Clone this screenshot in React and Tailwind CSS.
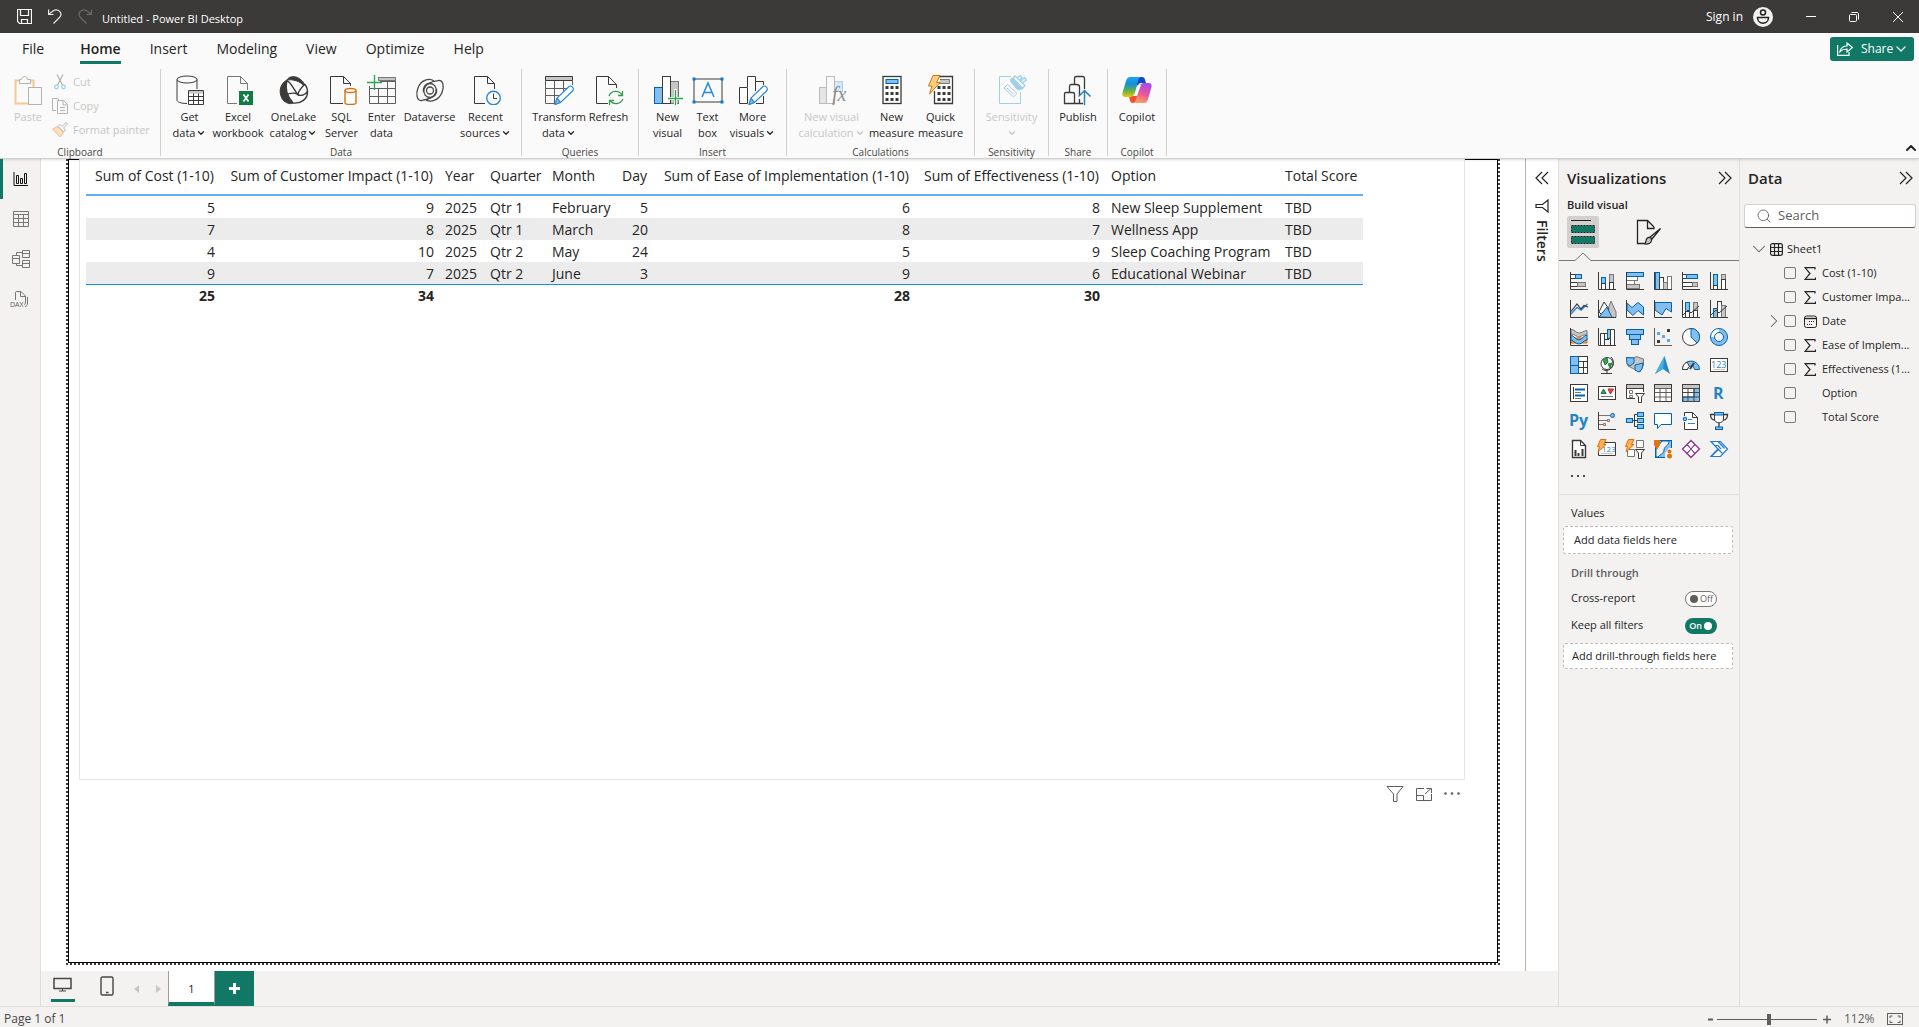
import { ChevronDown, ChevronRight, ChevronUp, Search } from 'lucide-react';

const DARK = '#3b3a39';
const BLUE = '#0063b1';
const SKY = '#83beec';
const GRAY = '#c8c6c4';
const MID = '#797775';

/* ---------- Ribbon icons (30 x 30) ---------- */

const Icon30 = ({ children }) => (
    <svg width="30" height="30" viewBox="0 0 30 30" fill="none" stroke={DARK} aria-hidden="true">
        {children}
    </svg>
);

const Pencil = () => (
    <>
        <path d="M11 29.5L13 23L25 11.5C27 10 31 13 28.5 16L16.5 27.5Z M13 23L16.5 27.5" stroke="#2b88d8" fill="#fff" strokeWidth="1.2" />
        <path d="M11 29.5L13 23.5L16 27.5Z" fill={SKY} stroke="#2b88d8" />
    </>
);

const icons = {
    paste: (
        <Icon30>
            <path d="M6.5 5.5H2.5V28.5H16M20.5 12V5.5H16.5" stroke="#f4c892" strokeWidth="2" />
            <path d="M6.5 8.5V4.5H8.5C8.5 0.5 14.5 0.5 14.5 4.5H17.5V8.5Z" stroke="#b5b3b1" fill="#fafafa" />
            <rect x="15.5" y="12.5" width="13" height="17" stroke="#b5b3b1" fill="#fafafa" />
        </Icon30>
    ),
    getData: (
        <Icon30>
            <ellipse cx="12" cy="4.5" rx="10" ry="3.5" />
            <path d="M2 4.5V25C2 27 6 28.5 12 28.5M22 4.5V14" />
            <path d="M13.5 15.5H28.5V29.5H13.5ZM13.5 21.5H28.5M13.5 25.5H28.5M18.5 18V29M23.5 18V29" fill="#fff" />
            <rect x="14" y="16" width="14" height="2.5" fill={GRAY} stroke="none" />
        </Icon30>
    ),
    excel: (
        <Icon30>
            <path d="M14 28.5H4.5V1.5H17.5L24.5 8.5V15M17.5 1.5V8.5H24.5" stroke={MID} />
            <rect x="16" y="16" width="14" height="14" fill="#107c41" stroke="none" />
            <path d="M20.5 19.5L25.5 26.5M25.5 19.5L20.5 26.5" stroke="#fff" strokeWidth="1.8" />
        </Icon30>
    ),
    oneLake: (
        <Icon30>
            <path d="M8 5C0 9 -1 20 5 26C9 29 12 29 14 28C7 22 6 12 8 5Z" fill={DARK} />
            <path d="M8 5C10 0.5 18 0.5 22 5C25 7 25 9 25 11C21 6 14 4 8 5Z" fill={DARK} />
            <path d="M8 5C6 12 7 20 14 28C22 29 29 24 28.5 16C28 12 27 10 25 9M8 6C11 6 14 13 19 20M25 10C22 13 19 16 19 20C22 21 27 20 28.5 16M7 20C12 17 18 18 19 20" strokeWidth="1.4" />
        </Icon30>
    ),
    sql: (
        <Icon30>
            <path d="M16 28.5H3.5V1.5H16.5L23.5 8.5V11M16.5 1.5V8.5H23.5" />
            <path d="M18 15.5V28C18 30 29 30 29 28V15.5" fill="#fff" stroke="#d67012" strokeWidth="1.4" />
            <ellipse cx="23.5" cy="15.5" rx="5.5" ry="2" fill="#fff" stroke="#d67012" strokeWidth="1.4" />
        </Icon30>
    ),
    enter: (
        <Icon30>
            <path d="M2.5 11V28.5H28.5V2.5H11M2.5 13.5H28.5M2.5 21.5H28.5M11.5 13V28M20.5 6V28M13 6.5H28" stroke="#605e5c" />
            <path d="M11.5 2.5H28.5V5.5H11.5Z" fill={GRAY} stroke={MID} />
            <path d="M7.5 0V15M0 7.5H15" stroke="#2da84f" strokeWidth="1.4" />
        </Icon30>
    ),
    dataverse: (
        <Icon30>
            <g stroke="#4a4846" strokeWidth="1.3">
                <path d="M19 6C14 2.5 6 5 3 13C0.5 19 2 26 6.5 25.5C10 25 19 24 21 17C22 12 19 8.5 15 8.5C10 8.5 7.5 13 8.5 17" />
                <path d="M11 25C16 28 24 25 27 17.5C29.5 11 28 5 23.5 5.5C20 6 11 7 9 14C8 19 11 22.5 15 22.5C20 22.5 22.5 18 21.5 14" />
                <circle cx="15" cy="15.5" r="3.5" />
            </g>
        </Icon30>
    ),
    recent: (
        <Icon30>
            <path d="M14 28.5H3.5V1.5H16.5L23.5 8.5V14M16.5 1.5V8.5H23.5" />
            <circle cx="22.5" cy="23" r="6.8" stroke="#2b88d8" fill="#fff" strokeWidth="1.4" />
            <path d="M22.5 18.5V23.5H26" />
        </Icon30>
    ),
    transform: (
        <Icon30>
            <path d="M1.5 5.5V28.5H11M1.5 13.5H24M1.5 20.5H18M10.5 6V28M19.5 6V18M28.5 6V10" stroke="#605e5c" />
            <path d="M1.5 1.5H28.5V5.5H1.5Z" fill={GRAY} />
            <Pencil />
        </Icon30>
    ),
    refresh: (
        <Icon30>
            <path d="M14 28.5H2.5V1.5H14.5L22.5 9.5V13M14.5 1.5V9.5H22.5" />
            <path d="M15 21C17 15 25 15 28 20M28.5 16V20.5H24M29 24C26 30 19 30 16 25.5M15.5 30V25.5H20" stroke="#2f9e4c" strokeWidth="1.3" />
        </Icon30>
    ),
    newVisual: (
        <Icon30>
            <rect x="1.5" y="12.5" width="8" height="16" fill={SKY} stroke={BLUE} />
            <rect x="17.5" y="6.5" width="8" height="22" fill={GRAY} stroke={MID} />
            <rect x="9.5" y="1.5" width="8" height="27" fill="#fff" />
            <path d="M22.5 14V30M15 23.5H30" stroke="#fff" strokeWidth="3" />
            <path d="M22.5 15V30M15 23.5H30" stroke="#2da84f" strokeWidth="1.4" />
        </Icon30>
    ),
    textBox: (
        <svg width="32" height="30" viewBox="0 0 32 30" fill="none" aria-hidden="true">
            <path d="M2 4H30V27H2Z" stroke={DARK} />
            <path d="M0.5 2.5h3v3h-3zM28.5 2.5h3v3h-3zM0.5 25.5h3v3h-3zM28.5 25.5h3v3h-3z" fill="#0f7ac8" />
            <path d="M10 22L16 8L22 22M12 17.5H20" stroke="#2b88d8" strokeWidth="1.5" />
        </svg>
    ),
    moreVisuals: (
        <Icon30>
            <path d="M1.5 12.5H9.5V28.5H1.5ZM9.5 12V1.5H17.5V16M17.5 6.5H25.5V10M25.5 21V28.5H18" />
            <Pencil />
        </Icon30>
    ),
    visualCalc: (
        <Icon30>
            <rect x="2.5" y="12.5" width="7" height="16" fill="#e6e4e2" stroke="#bbb" />
            <rect x="17.5" y="6.5" width="8" height="10" fill="#d3e8f8" stroke="#a9cfec" />
            <rect x="9.5" y="1.5" width="8" height="27" fill="#fafafa" stroke="#bbb" />
            <text x="15" y="26" fontFamily="Liberation Serif, serif" fontStyle="italic" fontSize="20" fill="#8f8d8b" stroke="none">fx</text>
        </Icon30>
    ),
    measure: (
        <Icon30>
            <rect x="6" y="1.5" width="18" height="27" fill="#fff" strokeWidth="1.3" />
            <rect x="9" y="4.5" width="12" height="4" fill={SKY} stroke={BLUE} />
            <path d="M8.5 12.5H21.5M8.5 18.5H21.5M8.5 24.5H21.5" strokeWidth="3" strokeDasharray="3 2" />
        </Icon30>
    ),
    quick: (
        <Icon30>
            <path d="M10 1.5H26.5V28.5H8.5V16" fill="#fff" strokeWidth="1.3" />
            <path d="M14 4.5H23.5V8.5H13" fill={GRAY} stroke={MID} />
            <path d="M11.5 12.5H24.5M11.5 18.5H24.5M11.5 24.5H24.5" strokeWidth="3" strokeDasharray="3 2" />
            <path d="M7 0.5H14L10.5 7.5H14L3.5 19L6 11H2.5Z" fill="#fdd17c" stroke="#d67012" />
        </Icon30>
    ),
    sensitivity: (
        <Icon30>
            <g stroke="#a0cfe9">
                <path d="M14 1.5H2.5V28.5H23.5V17" />
                <path d="M7 13L10.5 9.5L20 18.5L16.5 22ZM10 13L16.5 19" />
                <path d="M15 3C13 4 13 7 15 8L20 14C22 16 25 14 26 13Z" fill="#a0cfe9" />
                <path d="M16 3L18 1L28 10.5L25.5 13.5ZM20 3L23 0.5L25 2.5L23 5M25 8L29.5 5L27.5 2.5L24 6" fill="#fafafa" strokeWidth="1.3" />
            </g>
        </Icon30>
    ),
    publish: (
        <Icon30>
            <path d="M1.5 28.5V18.5C1.5 17.5 2 17.5 3 17.5H9C10.5 17.5 11.5 18 11.5 19V28.5ZM6.5 17V11.5C6.5 10 7 9.5 8 9.5H13.5C15.5 9.5 16.5 10 16.5 12V20M11.5 9V3.5C11.5 2 12 1.5 13.5 1.5H19.5C21 1.5 21.5 2 21.5 3.5V14M16.5 24V28.5H11.5M16 28.5H20" strokeWidth="1.3" />
            <path d="M21.5 30V16M15.5 21.5L21.5 15.5L27.5 21.5" stroke="#2b7fb8" strokeWidth="1.5" />
        </Icon30>
    ),
    copilot: (
        <svg width="30" height="30" viewBox="0 0 30 30" aria-hidden="true">
            <defs>
                <linearGradient id="copilotLeft" x1="0" y1="0" x2="0" y2="1">
                    <stop offset="0" stopColor="#1aa5ee" />
                    <stop offset="0.35" stopColor="#168fd8" />
                    <stop offset="0.7" stopColor="#67b345" />
                    <stop offset="1" stopColor="#f5c60a" />
                </linearGradient>
                <linearGradient id="copilotRight" x1="0.6" y1="0" x2="0.3" y2="1">
                    <stop offset="0" stopColor="#a64cf0" />
                    <stop offset="0.5" stopColor="#e8559b" />
                    <stop offset="1" stopColor="#ffa35c" />
                </linearGradient>
            </defs>
            <path d="M15 2H20C23 2 23 5 24 8H18L14 12Z" fill="#1546c8" />
            <path d="M15 28H11C8 28 8 25 7 21H12L17 18Z" fill="#ee4f35" />
            <path d="M8 2H19C16 3 16 6 15 10L13 18C12 21 10 22 8 22H3C0 22 0 19 1 16L4 6C5 3 6 2 8 2Z" fill="url(#copilotLeft)" />
            <path d="M22 28H11C14 27 14 24 15 20L17 12C18 9 20 8 22 8H27C30 8 30 11 29 14L26 24C25 27 24 28 22 28Z" fill="url(#copilotRight)" />
            <path d="M16 10H19L15 21H11C13 20 14 14 16 10Z" fill="#fafafa" />
        </svg>
    ),
};

const ribbonGroups = [
    {
        name: 'Data',
        width: 'w-[361px]',
        items: [
            { icon: 'getData', lines: ['Get', 'data'], menu: true, width: 'w-[40px]' },
            { icon: 'excel', lines: ['Excel', 'workbook'], width: 'w-[57px]' },
            { icon: 'oneLake', lines: ['OneLake', 'catalog'], menu: true, width: 'w-[54px]' },
            { icon: 'sql', lines: ['SQL', 'Server'], width: 'w-[42px]' },
            { icon: 'enter', lines: ['Enter', 'data'], width: 'w-[38px]' },
            { icon: 'dataverse', lines: ['Dataverse', ''], width: 'w-[58px]' },
            { icon: 'recent', lines: ['Recent', 'sources'], menu: true, width: 'w-[54px]' },
        ],
    },
    {
        name: 'Queries',
        width: 'w-[117px]',
        items: [
            { icon: 'transform', lines: ['Transform', 'data'], menu: true, width: 'w-[57px]' },
            { icon: 'refresh', lines: ['Refresh', ''], width: 'w-[42px]' },
        ],
    },
    {
        name: 'Insert',
        width: 'w-[148px]',
        items: [
            { icon: 'newVisual', lines: ['New', 'visual'], width: 'w-[42px]' },
            { icon: 'textBox', lines: ['Text', 'box'], width: 'w-[38px]' },
            { icon: 'moreVisuals', lines: ['More', 'visuals'], menu: true, width: 'w-[52px]' },
        ],
    },
    {
        name: 'Calculations',
        width: 'w-[188px]',
        items: [
            { icon: 'visualCalc', lines: ['New visual', 'calculation'], menu: true, width: 'w-[68px]', disabled: true },
            { icon: 'measure', lines: ['New', 'measure'], width: 'w-[52px]' },
            { icon: 'quick', lines: ['Quick', 'measure'], width: 'w-[46px]' },
        ],
    },
    {
        name: 'Sensitivity',
        width: 'w-[74px]',
        items: [{ icon: 'sensitivity', lines: ['Sensitivity', ''], menu: true, width: 'w-[60px]', disabled: true }],
    },
    {
        name: 'Share',
        width: 'w-[59px]',
        items: [{ icon: 'publish', lines: ['Publish', ''], width: 'w-[44px]' }],
    },
    {
        name: 'Copilot',
        width: 'w-[59px]',
        items: [{ icon: 'copilot', lines: ['Copilot', ''], width: 'w-[44px]' }],
    },
];

/* ---------- Visualization gallery icons (18 x 18) ---------- */

const Axis = () => <path d="M0.5 0V17.5H18" />;
const blue = { fill: SKY, stroke: BLUE };
const gray = { fill: GRAY, stroke: MID };
const white = { fill: '#fff', stroke: DARK };
const Bolt = () => <path d="M2.5 -0.5H8L5.5 4.5H8L0 12L1.5 6.5H-0.5Z" fill="#fdb04f" stroke="#d67012" />;
const Funnel = () => <path d="M9.5 9.5H18.5L15.5 13V18.5H12.5V13Z" {...white} />;

const visuals = [
    ['Stacked bar chart', <><rect x="0.5" y="2.5" width="5" height="4" {...white} /><rect x="5.5" y="2.5" width="6" height="4" {...blue} /><rect x="0.5" y="10.5" width="7" height="4" {...white} /><rect x="7.5" y="10.5" width="8" height="4" {...gray} /><Axis /></>],
    ['Stacked column chart', <><rect x="3.5" y="5.5" width="4" height="6" {...blue} /><rect x="3.5" y="11.5" width="4" height="6" {...white} /><rect x="11.5" y="2.5" width="4" height="8" {...gray} /><rect x="11.5" y="10.5" width="4" height="7" {...white} /><Axis /></>],
    ['Clustered bar chart', <><rect x="0.5" y="4.5" width="11" height="4" {...gray} fill="#fff" /><rect x="0.5" y="8.5" width="8" height="4" {...gray} fill="#fff" /><rect x="0.5" y="12.5" width="13" height="4" {...gray} /><rect x="0.5" y="0.5" width="17" height="4" {...blue} /><Axis /></>],
    ['Clustered column chart', <><rect x="1.5" y="0.5" width="4" height="17" {...blue} /><rect x="5.5" y="5.5" width="4" height="12" {...white} /><rect x="9.5" y="10.5" width="4" height="7" {...gray} /><rect x="13.5" y="4.5" width="4" height="13" {...gray} fill="#fff" /><Axis /></>],
    ['100% stacked bar chart', <><rect x="0.5" y="2.5" width="4" height="4" {...white} /><rect x="4.5" y="2.5" width="11" height="4" {...blue} /><rect x="0.5" y="10.5" width="10" height="4" {...white} /><rect x="10.5" y="10.5" width="5" height="4" {...gray} /><Axis /></>],
    ['100% stacked column chart', <><rect x="3.5" y="2.5" width="4" height="11" {...blue} /><rect x="3.5" y="13.5" width="4" height="4" {...white} /><rect x="11.5" y="2.5" width="4" height="5" {...gray} /><rect x="11.5" y="7.5" width="4" height="10" {...white} /><Axis /></>],
    ['Line chart', <><path d="M1 14L7 7.5L11 10L17.5 4" stroke="#2b88d8" strokeWidth="1.4" /><path d="M1 11.5L7 4L11 9L14 5.5L18 7" stroke={DARK} strokeWidth="1.2" /><Axis /></>],
    ['Area chart', <><path d="M7 17L13 1L18 12V17.5Z" {...gray} /><path d="M1 12L6 2L11 9L6 17Z" {...white} /><path d="M1 17L9 7L14 17.5Z" {...blue} /><Axis /></>],
    ['Stacked area chart', <><path d="M1 3L6 7.5L12 2.5L17.5 7V15L12 10.5L7 15.5L1 10Z" {...blue} /><Axis /></>],
    ['100% stacked area chart', <><path d="M1 2.5H17.5V12L12 8.5L8 15L1 10Z" {...blue} /><Axis /></>],
    ['Line and stacked column chart', <><rect x="3.5" y="2.5" width="4" height="9" {...blue} /><rect x="3.5" y="11.5" width="4" height="6" {...white} /><rect x="11.5" y="2.5" width="4" height="8" {...gray} /><rect x="11.5" y="10.5" width="4" height="7" {...white} /><path d="M1 15L6 10L9 13L17 6" /><Axis /></>],
    ['Line and clustered column chart', <><rect x="3.5" y="8.5" width="4" height="9" {...blue} /><rect x="7.5" y="1.5" width="4" height="16" {...white} /><rect x="11.5" y="5.5" width="4" height="12" {...gray} /><path d="M1 15L6 10L9 13L17 6" /><Axis /></>],
    ['Ribbon chart', <><path d="M1 10H17V15H1Z" fill="#f7a13d" stroke="#d67012" /><path d="M1 1.5C4 1 6 5 9 5S13 3 17 2.5V7C13 6 11 9 9 9S5 6 1 6Z" {...gray} /><path d="M1 7C4 8 6 12 9 12S14 7 17 7V12C14 12 12 16 9 16S4 13 1 12Z" {...blue} /><Axis /></>],
    ['Waterfall chart', <><path d="M2.5 17V5.5H6.5V17" {...white} /><rect x="6.5" y="5.5" width="4" height="6" {...white} /><rect x="9.5" y="1.5" width="3" height="9" {...blue} /><path d="M12.5 17V1.5H16.5V17" {...white} /><Axis /></>],
    ['Funnel chart', <><rect x="0.5" y="1.5" width="17" height="5" {...blue} /><rect x="3.5" y="6.5" width="11" height="5" {...blue} /><rect x="5.5" y="11.5" width="7" height="5" {...blue} /></>],
    ['Scatter chart', <><g stroke="none"><path d="M13 1h3v3h-3zM3 12h3v3h-3z" fill={DARK} /><path d="M3 4h3v3h-3zM8 7h3v3h-3zM13 11h3v3h-3z" fill="#5ea9e8" /></g><path d="M0.5 0V17.5H18" stroke="#605e5c" /></>],
    ['Pie chart', <><circle cx="9" cy="9" r="8.5" {...white} /><path d="M9 9V0.5A8.5 8.5 0 0 1 15 15Z" {...blue} /></>],
    ['Donut chart', <><circle cx="9" cy="9" r="6.5" stroke={SKY} strokeWidth="4" /><path d="M9 2.5A6.5 6.5 0 0 0 2.5 9" stroke="#fff" strokeWidth="4" /><circle cx="9" cy="9" r="8.5" stroke={BLUE} /><circle cx="9" cy="9" r="4.5" stroke={BLUE} /></>],
    ['Treemap', <><rect x="0.5" y="0.5" width="17" height="17" {...white} /><rect x="0.5" y="0.5" width="8" height="17" {...blue} /><path d="M0.5 9.5H8.5" stroke={BLUE} /><path d="M8.5 5.5H17.5M8.5 11.5H17.5M13.5 5.5V17.5" /></>],
    ['Map', <><circle cx="9" cy="7.5" r="6" fill="#fff" /><path d="M5 4L9 2L10 6L7 9ZM10 8L14 7L12 12Z" fill="#2da84f" stroke="#1d7a36" /><path d="M13 1C18 6 15 14 8 14.5M4 13C6 14 8 15 9 14.5V17M3 17.5H14" /></>],
    ['Filled map', <><path d="M0.5 1.5L8 2L10 0.5L17.5 3V9L14 16L8 13L2 10Z" {...gray} /><path d="M0.5 1.5L8 2V7L4 10L1 8ZM9 9L17 7L16 13L13 16L9 14Z" {...blue} /></>],
    ['Azure map', <><path d="M10.5 0L16 18L9 13L1 18Z" fill="#2b88c8" stroke="none" /><path d="M10.5 0L9 13L1 18Z" fill="#45b3dc" stroke="none" /></>],
    ['Gauge', <><path d="M0.5 13.5A8.5 8.5 0 0 1 17.5 13.5H12.5A3.5 3.5 0 0 0 5.5 13.5Z" {...blue} /><path d="M0.5 13.5A8.5 8.5 0 0 1 5 6L7.5 10.5Q5.5 11.5 5.5 13.5Z" {...white} /><path d="M8 13L12 7" strokeWidth="2" /></>],
    ['Card', <><rect x="0.5" y="2.5" width="17" height="13" {...white} /><text x="1" y="12" fontSize="9" fill="#2b7fd0" stroke="none">123</text><path d="M3 13.5H15" stroke={GRAY} /></>],
    ['Multi-row card', <><rect x="0.5" y="0.5" width="17" height="17" {...white} /><path d="M3.5 3V15" /><path d="M5 5.5H15M5 11.5H15" stroke={BLUE} strokeWidth="2" /><path d="M5 8.5H11M5 14.5H11" stroke={MID} /></>],
    ['KPI', <><rect x="0.5" y="2.5" width="17" height="13" {...white} /><path d="M3 9.5L5.5 5L8 9.5Z" fill="#2da84f" stroke="#1d7a36" /><path d="M10 5H15.5L12.5 10Z" fill="#e84a4a" stroke="#b22" /><path d="M3 12.5H15" stroke={MID} /></>],
    ['Slicer', <><path d="M9 14.5H0.5V0.5H17.5V8" {...white} /><path d="M1 1H17V4H1Z" fill={GRAY} stroke="none" /><path d="M0.5 4.5H17.5M0.5 0.5H17.5" /><path d="M3.5 6.5h3v3h-3zM3.5 11.5h3v2h-3z" stroke={MID} /><Funnel /></>],
    ['Table', <><rect x="0.5" y="0.5" width="17" height="17" {...white} /><path d="M1 1H17V4H1Z" fill={GRAY} stroke="none" /><path d="M0.5 4.5H17.5M0.5 8.5H17.5M0.5 13H17.5M6 4.5V17.5M12 4.5V17.5" stroke="#605e5c" /></>],
    ['Matrix', <><rect x="0.5" y="0.5" width="17" height="17" {...white} /><path d="M1 1H17V4H1Z" fill={GRAY} stroke="none" /><path d="M12 4.5H17.5V17.5H1V13H12Z" {...blue} /><path d="M0.5 4.5H17.5M0.5 8.5H17.5M0.5 13H17.5M6 4.5V17.5M12 4.5V17.5M0.5 0.5V17.5H17.5V0.5" stroke="#484644" /></>],
    ['R script visual', <text x="3" y="15" fontSize="16" fontWeight="700" fill="#2484c6" stroke="none">R</text>],
    ['Python visual', <text x="-1" y="14" fontSize="16" fontWeight="700" fill="#2484c6" stroke="none">Py</text>],
    ['Key influencers', <><path d="M1 3.5H12M1 8.5H9M1 12.5H5" stroke={MID} /><circle cx="14.5" cy="3.5" r="2" {...blue} /><path d="M9.5 7.5h2v2h-2zM5.5 11.5h2v2h-2z" stroke={MID} /><Axis /></>],
    ['Decomposition tree', <><path d="M6 8.5H11M8.5 2.5V14.5M8.5 2.5H11M8.5 14.5H11" /><rect x="0.5" y="6.5" width="6" height="4" {...blue} /><rect x="11.5" y="0.5" width="6" height="4" {...blue} /><rect x="11.5" y="6.5" width="6" height="4" {...blue} /><rect x="11.5" y="12.5" width="6" height="4" {...blue} /></>],
    ['Q&A', <path d="M0.5 1.5H17.5V12.5H7L3.5 16.5V12.5H0.5Z" fill="#fff" stroke={BLUE} />],
    ['Narrative', <><path d="M2.5 4V0.5H10.5L15.5 5.5V17.5H2.5V10" {...white} /><path d="M10.5 0.5V5.5H15.5" /><circle cx="3" cy="7" r="1.8" {...blue} /><path d="M6 7.5H10M6 11.5H13" stroke="#2b88d8" /></>],
    ['Goals', <><path d="M4.5 0.5H13.5V7C13.5 12 4.5 12 4.5 7Z" {...white} /><path d="M4.5 0.5H13.5V3H4.5Z" {...blue} /><path d="M4.5 2.5H0.5C0.5 6 2 8 5 8M13.5 2.5H17.5C17.5 6 16 8 13 8M9 11V15" strokeWidth="1.3" /><rect x="5.5" y="15" width="7" height="2.5" {...blue} /></>],
    ['Paginated report', <><path d="M2.5 0.5H10.5L15.5 5.5V17.5H2.5Z" {...white} strokeWidth="1.4" /><path d="M10.5 0.5V5.5H15.5" /><path d="M5.5 16V10M8.5 16V13M12.5 16V9" strokeWidth="2" /></>],
    ['Card (new)', <><path d="M7 2.5H17.5V15.5H0.5V11" {...white} /><text x="4" y="12" fontSize="8" fill="#2b7fd0" stroke="none">123</text><path d="M3 13.5H15" stroke={GRAY} /><Bolt /></>],
    ['Slicer (new)', <><path d="M10.5 0.5H17.5V7.5H10.5ZM1.5 9.5H8.5V16.5H1.5Z" stroke={MID} fill="#fff" /><Funnel /><Bolt /></>],
    ['ArcGIS map', <><rect x="1.5" y="0.5" width="16" height="17" {...blue} /><path d="M8 1H15C15 6 10 6 10 10S6 14 4 17H2V9Z" fill="#f3f2f1" stroke={BLUE} /><path d="M15 8H19V19H11V13Z" fill="#f3f2f1" stroke="none" /><path d="M0 0H6V5L3 10L0 5Z" fill="#e07414" stroke="none" /><circle cx="15.5" cy="11.5" r="2" fill="#e07414" stroke="none" /><circle cx="15.5" cy="16" r="2.5" fill="#e07414" stroke="none" /></>],
    ['Power Apps', <g stroke="#8e3a96"><path d="M9 0.5L17.5 9L9 17.5L0.5 9Z" fill="#fff" strokeWidth="1.4" /><path d="M4.5 4.5L13.5 13.5M13.5 4.5L4.5 13.5M9 1L12.5 4.5L9 9L5.5 4.5ZM9 17L12.5 13.5L9 9L5.5 13.5Z" /></g>],
    ['Power Automate', <g stroke="#1f7ad0" strokeWidth="1.2"><path d="M1 1.5H10.5L17.5 9L10.5 16.5H1L8 9Z" fill="#fff" /><path d="M4.5 5.5H8L11 9M8 1.5L14.5 8.5M8 9L12.5 13.5M1 16.5L9 9" /></g>],
];

const columns = [
    { label: 'Sum of Cost (1-10)', width: 'w-[134px]', right: true },
    { label: 'Sum of Customer Impact (1-10)', width: 'w-[219px]', right: true },
    { label: 'Year', width: 'w-[45px]' },
    { label: 'Quarter', width: 'w-[62px]' },
    { label: 'Month', width: 'w-[69px]' },
    { label: 'Day', width: 'w-[38px]', right: true },
    { label: 'Sum of Ease of Implementation (1-10)', width: 'w-[262px]', right: true },
    { label: 'Sum of Effectiveness (1-10)', width: 'w-[190px]', right: true },
    { label: 'Option', width: 'w-[174px]' },
    { label: 'Total Score', width: 'w-[84px]' },
];

const rows = [
    [5, 9, 2025, 'Qtr 1', 'February', 5, 6, 8, 'New Sleep Supplement', 'TBD'],
    [7, 8, 2025, 'Qtr 1', 'March', 20, 8, 7, 'Wellness App', 'TBD'],
    [4, 10, 2025, 'Qtr 2', 'May', 24, 5, 9, 'Sleep Coaching Program', 'TBD'],
    [9, 7, 2025, 'Qtr 2', 'June', 3, 9, 6, 'Educational Webinar', 'TBD'],
];

const totals = [25, 34, '', '', '', '', 28, 30, '', ''];

const fields = [
    { label: 'Cost (1-10)', icon: 'sum' },
    { label: 'Customer Impa...', icon: 'sum' },
    { label: 'Date', icon: 'date' },
    { label: 'Ease of Implem...', icon: 'sum' },
    { label: 'Effectiveness (1...', icon: 'sum' },
    { label: 'Option' },
    { label: 'Total Score' },
];

const DoubleChevron = ({ left }) => (
    <svg width="14" height="14" viewBox="0 0 14 14" fill="none" stroke="#252423" strokeWidth="1.2" className={left ? 'rotate-180' : ''} aria-hidden="true">
        <path d="M1 1L7 7L1 13M7 1L13 7L7 13" />
    </svg>
);

const TitleBar = () => (
    <div className="flex h-[33px] items-center bg-[#3b3a38] text-white">
        <div className="flex items-center gap-4 pl-[17px]">
            <button aria-label="Save">
                <svg width="15" height="15" viewBox="0 0 15 15" fill="none" stroke="#fff" strokeWidth="1.2">
                    <path d="M0.5 0.5H14.5V14.5H2.5L0.5 12.5ZM3.5 0.5V6.5H11.5V0.5M4.5 14.5V10.5H10.5V14.5" />
                </svg>
            </button>
            <button aria-label="Undo">
                <svg width="14" height="15" viewBox="0 0 14 15" fill="none" stroke="#e8e6e4" strokeWidth="1.2">
                    <path d="M0.6 0.5V5.5H5.5M0.6 5.5L5 2C10 -1 15.5 4 11.5 8.5L5.5 14.5" />
                </svg>
            </button>
            <button aria-label="Redo" disabled>
                <svg width="14" height="15" viewBox="0 0 14 15" fill="none" stroke="#6b6a68" strokeWidth="1.2">
                    <path d="M13.4 0.5V5.5H8.5M13.4 5.5L9 2C4 -1 -1.5 4 2.5 8.5L8.5 14.5" />
                </svg>
            </button>
        </div>
        <span className="pt-[5px] pl-[10px] text-[11px]">Untitled - Power BI Desktop</span>
        <div className="ml-auto flex items-center">
            <button className="text-[12px]">Sign in</button>
            <svg width="20" height="20" viewBox="0 0 20 20" className="ml-[10px]" aria-hidden="true">
                <circle cx="10" cy="10" r="10" fill="#f3f2f1" />
                <circle cx="10" cy="5.5" r="2.5" fill="none" stroke="#222" strokeWidth="1.5" />
                <path d="M4.5 10.5H15.5C15.5 18 4.5 18 4.5 10.5Z" fill="none" stroke="#222" strokeWidth="1.5" />
            </svg>
            <button aria-label="Minimize" className="ml-4 flex w-[43px] justify-center">
                <svg width="10" height="10" viewBox="0 0 10 10" stroke="#fff"><path d="M0 4.5H10" /></svg>
            </button>
            <button aria-label="Restore" className="flex w-11 justify-center">
                <svg width="10" height="10" viewBox="0 0 10 10" fill="none" stroke="#fff"><rect x="0.5" y="2.5" width="7" height="7" rx="1" /><path d="M2.5 0.5H8C9 0.5 9.5 1 9.5 2V7.5" /></svg>
            </button>
            <button aria-label="Close" className="flex w-[43px] justify-center">
                <svg width="10" height="10" viewBox="0 0 10 10" stroke="#fff"><path d="M0 0L10 10M10 0L0 10" /></svg>
            </button>
        </div>
    </div>
);

const menuTabs = ['File', 'Home', 'Insert', 'Modeling', 'View', 'Optimize', 'Help'];

const RibbonButton = ({ item }) => (
    <button
        disabled={item.disabled}
        className={`flex flex-col items-center whitespace-nowrap text-[11px] leading-4 ${item.width} ${item.disabled ? 'text-[#c8c6c4]' : 'text-[#252423]'}`}
    >
        <span className="mb-1 block h-[30px]">{icons[item.icon]}</span>
        <span>{item.lines[0]}</span>
        <span className="flex h-4 items-center gap-px">
            {item.lines[1]}
            {item.menu && <ChevronDown className="h-[10px] w-[10px]" strokeWidth={3} />}
        </span>
    </button>
);

const Ribbon = () => (
    <header className="relative z-10 border-b border-[#d2d0ce] bg-[#fafafa] shadow-sm">
        <div className="flex h-8 items-start">
            <nav className="flex gap-[29px] pl-[22px] text-[14px]">
                {menuTabs.map((tab) => (
                    <button
                        key={tab}
                        className={`h-[31px] border-b-[3px] pt-1 leading-6 first:mr-[7px] ${tab === 'Home' ? 'border-[#117865] font-semibold' : 'border-transparent'}`}
                    >
                        {tab}
                    </button>
                ))}
            </nav>
            <button className="mt-1 mr-[5px] ml-auto flex h-6 w-[84px] items-center rounded-[3px] bg-[#117865] pl-[7px] text-[12px] text-white">
                <svg width="16" height="14" viewBox="0 0 16 14" fill="none" stroke="#fff" strokeWidth="1.2" aria-hidden="true">
                    <path d="M0.6 3V13.4H12V10" />
                    <path d="M3 9.5C4 5.5 6 4 10 4V1L15.5 5.5L10 10V7C7 7 5 7.5 3 9.5Z" />
                </svg>
                <span className="ml-2">Share</span>
                <ChevronDown className="h-4 w-4" strokeWidth={1.8} />
            </button>
        </div>
        <div className="flex h-[93px] pt-1 pb-[2px]">
            <div className="flex w-[161px] flex-col border-r border-[#d2d0ce] text-[11px] text-[#c8c6c4]">
                <div className="flex grow pt-[6px] pl-[14px]">
                    <button disabled className="flex w-[28px] flex-col items-center leading-4">
                        <span className="mb-1 block h-[30px]">{icons.paste}</span>
                        Paste
                    </button>
                    <div className="-mt-[5px] flex flex-col items-start pl-[10px]">
                        <button disabled className="flex h-6 items-center gap-[5px]">
                            <svg width="16" height="16" viewBox="0 0 16 16" fill="none" stroke="#b5b3b1" aria-hidden="true">
                                <path d="M5 0.5L10.5 11M11 0.5L5.5 11" strokeWidth="1.3" />
                                <circle cx="4.5" cy="13" r="1.8" stroke="#a0cfe9" strokeWidth="1.3" />
                                <circle cx="11.5" cy="13" r="1.8" stroke="#a0cfe9" strokeWidth="1.3" />
                            </svg>
                            Cut
                        </button>
                        <button disabled className="flex h-6 items-center gap-[5px]">
                            <svg width="16" height="16" viewBox="0 0 16 16" fill="none" stroke="#b5b3b1" aria-hidden="true">
                                <path d="M4 12.5H0.5V0.5H5.5L7 2" />
                                <path d="M5.5 2.5H11.5L15.5 6.5V15.5H5.5ZM11 3V7H15M8 9.5H13M8 12.5H13" />
                            </svg>
                            Copy
                        </button>
                        <button disabled className="flex h-6 items-center gap-[5px] whitespace-nowrap">
                            <svg width="16" height="16" viewBox="0 0 16 16" fill="none" aria-hidden="true">
                                <path d="M0.5 7L6 4.5L11.5 10L8 15Z" fill="#fbe0c2" stroke="#f0bb8a" />
                                <path d="M6 4.5L8 2.5L10 4.5L14 0.5L15.5 2L11.5 6L13.5 8L11.5 10Z" stroke="#b5b3b1" />
                            </svg>
                            Format painter
                        </button>
                    </div>
                </div>
                <div className="text-center text-[10px] leading-[7px] text-[#484644]">Clipboard</div>
            </div>
            {ribbonGroups.map((group) => (
                <div key={group.name} className={`flex shrink-0 flex-col border-r border-[#d2d0ce] ${group.width}`}>
                    <div className="flex grow justify-center pt-[6px]">
                        {group.items.map((item) => <RibbonButton key={item.icon} item={item} />)}
                    </div>
                    <div className="text-center text-[10px] leading-[7px] text-[#484644]">{group.name}</div>
                </div>
            ))}
            <button aria-label="Collapse ribbon" className="ml-auto self-end">
                <ChevronUp className="h-4 w-4" strokeWidth={3} />
            </button>
        </div>
    </header>
);

const SideRail = () => (
    <nav className="flex w-[41px] flex-col border-r border-[#e1dfdd]">
        <button aria-label="Report view" className="flex h-10 items-center border-l-[3px] border-[#117865] pl-[10px]">
            <svg width="16" height="16" viewBox="0 0 16 16" fill="none" stroke="#111" aria-hidden="true">
                <path d="M1 1V14.5H15M3.5 4.5H5.5V12.5H3.5ZM7.5 7.5H9.5V12.5H7.5ZM11.5 2.5H13.5V12.5H11.5Z" />
            </svg>
        </button>
        <button aria-label="Table view" className="flex h-10 items-center pl-[13px]">
            <svg width="16" height="16" viewBox="0 0 16 16" fill="none" stroke="#797775" aria-hidden="true">
                <path d="M0.5 0.5H15.5V15.5H0.5ZM0.5 3.5H15.5M0.5 7.5H15.5M0.5 11.5H15.5M5.5 3.5V15.5M10.5 3.5V15.5" />
            </svg>
        </button>
        <button aria-label="Model view" className="flex h-10 items-center pl-3">
            <svg width="18" height="18" viewBox="0 0 18 18" fill="none" stroke="#797775" aria-hidden="true">
                <path d="M0.5 5.5H7.5V13.5H0.5ZM0.5 8.5H7.5M10.5 0.5H17.5V7.5H10.5ZM10.5 3.5H17.5M10.5 10.5H17.5V17.5H10.5ZM10.5 13.5H17.5M4.5 5V2.5H10M4.5 14V15.5H10" />
            </svg>
        </button>
        <button aria-label="DAX query view" className="flex h-10 items-center pl-[10px]">
            <svg width="20" height="18" viewBox="0 0 20 18" fill="none" stroke="#797775" aria-hidden="true">
                <path d="M5.5 10V3C5.5 1.5 6 1.5 7 1.5H11L15.5 6V12C15.5 14 15 14.5 14 14.5M10.5 1.5V6.5H15.5M17.5 7V13C17.5 15 17 16 15 16.5" />
                <text x="0" y="17" fontSize="7" fill="#605e5c" stroke="none">DAX</text>
            </svg>
        </button>
    </nav>
);

const DataTable = () => (
    <table className="table-fixed border-collapse text-[14px] leading-5 text-[#252423]">
        <thead>
            <tr className="h-[36px] border-b-2 border-[#61aef2] align-top">
                {columns.map((col) => (
                    <th key={col.label} className={`whitespace-nowrap pt-[7px] pl-[6px] font-normal ${col.width} ${col.right ? 'pr-[6px] text-right' : 'text-left'}`}>
                        {col.label}
                    </th>
                ))}
            </tr>
        </thead>
        <tbody>
            {rows.map((row, i) => (
                <tr key={row[8]} className={i % 2 ? 'bg-[#ececec]' : ''}>
                    {row.map((cell, j) => (
                        <td key={columns[j].label} className={`whitespace-nowrap pt-[2px] pl-[6px] ${columns[j].right ? 'pr-[5px] text-right' : ''}`}>{cell}</td>
                    ))}
                </tr>
            ))}
        </tbody>
        <tfoot>
            <tr className="border-t border-[#118dff] font-bold">
                {totals.map((cell, j) => (
                    <td key={columns[j].label} className="pt-[1px] pr-[5px] text-right">{cell}</td>
                ))}
            </tr>
        </tfoot>
    </table>
);

const Canvas = () => (
    <main className="flex min-w-0 grow bg-white px-[25px] pb-[6px]">
        <div className="flex grow border-x-2 border-b-2 border-dotted border-[#3b3a39]">
            <div className="flex grow flex-col border border-black pr-8 pl-[10px]">
                <section className="relative -mt-px min-h-0 grow overflow-hidden border-x border-b border-[#e6e6e6] bg-white pl-[6px]">
                    <DataTable />
                </section>
                <div className="flex h-[182px] items-start justify-end gap-3 pt-[5px] pr-[5px]">
                    <button aria-label="Filters on visual">
                        <svg width="18" height="18" viewBox="0 0 18 18" fill="none" stroke="#605e5c" aria-hidden="true">
                            <path d="M1 1.5H17L11 9V16.5H7.5V9Z" />
                        </svg>
                    </button>
                    <button aria-label="Focus mode">
                        <svg width="16" height="18" viewBox="0 0 16 18" fill="none" stroke="#605e5c" aria-hidden="true">
                            <path d="M8 3.5H0.5V15.5H15.5V9M0.5 10.5H7.5V15.5M9 9L15 3.5M10.5 3.5H15.5V8" />
                        </svg>
                    </button>
                    <button aria-label="More options">
                        <svg width="16" height="18" viewBox="0 0 16 18" fill="#605e5c" aria-hidden="true">
                            <circle cx="1.5" cy="8.5" r="1.3" /><circle cx="8" cy="8.5" r="1.3" /><circle cx="14.5" cy="8.5" r="1.3" />
                        </svg>
                    </button>
                </div>
            </div>
        </div>
    </main>
);

const FiltersPane = () => (
    <aside className="flex w-[33px] flex-col items-center border-l border-[#b3b0ad] bg-white pt-3">
        <button aria-label="Expand filters"><DoubleChevron left /></button>
        <svg width="14" height="14" viewBox="0 0 14 14" fill="none" stroke="#252423" strokeWidth="1.2" className="mt-[14px]" aria-hidden="true">
            <path d="M13 1V13L7.5 8.5H1V5.5H7.5Z" />
        </svg>
        <h2 className="mt-[7px] text-[14px] leading-4 font-semibold text-[#252423] [writing-mode:vertical-rl]">Filters</h2>
    </aside>
);

const PageTabs = () => (
    <div className="flex h-[35px] pl-[10px]">
        <button aria-label="Desktop layout" className="flex h-[31px] w-6 flex-col items-start border-b-[3px] border-[#117865] pt-[6px] pl-[2px]">
            <svg width="19" height="15" viewBox="0 0 19 15" fill="none" stroke="#484644" aria-hidden="true">
                <path d="M1 1.5H18V11.5H1Z" strokeWidth="1.5" /><path d="M9.5 12V14M6 14H13" />
            </svg>
        </button>
        <button aria-label="Mobile layout" className="ml-[25px] flex w-[14px] pt-[5px]">
            <svg width="14" height="20" viewBox="0 0 14 20" fill="none" stroke="#484644" aria-hidden="true">
                <rect x="1" y="1" width="12" height="18" rx="1.5" strokeWidth="1.4" /><path d="M6 16.5H8.5" strokeWidth="1.5" />
            </svg>
        </button>
        <button aria-label="Previous page" className="ml-5 flex items-center">
            <svg width="5" height="8" viewBox="0 0 5 8" fill="#c8c6c4"><path d="M5 0V8L0 4Z" /></svg>
        </button>
        <button aria-label="Next page" className="ml-[17px] flex items-center">
            <svg width="5" height="8" viewBox="0 0 5 8" fill="#c8c6c4"><path d="M0 0V8L5 4Z" /></svg>
        </button>
        <button className="ml-[7px] w-[47px] border-x border-b-4 border-x-[#a19f9d] border-b-[#117865] bg-white pt-[6px] text-[11px]">1</button>
        <button aria-label="New page" className="flex w-[39px] items-center justify-center bg-[#117865]">
            <svg width="11" height="11" viewBox="0 0 11 11" stroke="#fff" strokeWidth="3"><path d="M5.5 0V11M0 5.5H11" /></svg>
        </button>
    </div>
);

const Toggle = ({ label, on }) => (
    <label className="flex h-[27px] items-center justify-between pr-4 text-[11px]">
        {label}
        <input type="checkbox" role="switch" defaultChecked={on} className="sr-only" />
        {on ? (
            <span className="flex h-4 w-8 items-center justify-end gap-[2px] rounded-full bg-[#117865] pr-[5px] text-[9px] font-semibold text-white">
                On<span className="h-2 w-2 rounded-full bg-white" />
            </span>
        ) : (
            <span className="flex h-4 w-8 items-center gap-[2px] rounded-full border border-[#797775] bg-white pl-1 text-[9px] text-[#605e5c]">
                <span className="h-2 w-2 rounded-full bg-[#605e5c]" />Off
            </span>
        )}
    </label>
);

const VisualizationsPane = () => (
    <aside className="w-[181px] shrink-0 border-l border-[#e1dfdd]">
        <div className="flex h-[38px] items-center justify-between pr-[7px] pl-2">
            <h2 className="text-[15px] font-semibold">Visualizations</h2>
            <button aria-label="Collapse visualizations"><DoubleChevron /></button>
        </div>
        <h3 className="pl-2 text-[11px] leading-4 font-semibold">Build visual</h3>
        <div className="mt-[3px] flex h-8 gap-[34px] pl-2">
            <button aria-label="Build visual" className="flex h-8 w-8 items-center justify-center rounded-[2px] bg-[#d2d0ce]">
                <svg width="24" height="26" viewBox="0 0 24 26" fill="none" aria-hidden="true">
                    <path d="M0 1.5H20" stroke="#252423" />
                    <rect x="0.5" y="6.5" width="23" height="7" fill="#117865" stroke="#252423" strokeDasharray="2 1" />
                    <rect x="0.5" y="17.5" width="23" height="7" fill="#117865" stroke="#252423" strokeDasharray="2 1" />
                </svg>
            </button>
            <button aria-label="Format visual" className="flex w-8 items-center justify-center">
                <svg width="26" height="26" viewBox="0 0 26 26" fill="none" stroke="#252423" aria-hidden="true">
                    <path d="M7 24.5H1.5V1.5H11.5L18 8M11.5 1.5V9.5H18V8" strokeWidth="1.3" />
                    <path d="M24.5 9.5L16 20L14 18ZM15 19C12 17 10 20 10 22C10 24 9 24.5 7 24.5C12 26 17 24 15 19Z" strokeWidth="1.2" fill="#c8c6c4" />
                </svg>
            </button>
        </div>
        <svg width="180" height="13" viewBox="0 0 180 13" fill="none" stroke="#797775" className="block" aria-hidden="true">
            <path d="M0 12.5H16L24 5L32 12.5H180" />
        </svg>
        <div className="grid grid-cols-[repeat(6,18px)] gap-[10px] pt-[11px] pl-[11px]">
            {visuals.map(([name, drawing]) => (
                <button key={name} aria-label={name} title={name} className="h-[18px] w-[18px]">
                    <svg width="18" height="18" viewBox="0 0 18 18" fill="none" stroke={DARK} className="overflow-visible" aria-hidden="true">{drawing}</svg>
                </button>
            ))}
        </div>
        <button aria-label="Get more visuals" className="mt-[14px] ml-3 flex h-[8px] items-center gap-1">
            <span className="h-[2px] w-[2px] bg-[#484644]" /><span className="h-[2px] w-[2px] bg-[#484644]" /><span className="h-[2px] w-[2px] bg-[#484644]" />
        </button>
        <div className="mt-[14px] border-t border-[#e1dfdd] pr-[6px] pl-1 text-[11px]">
            <h3 className="pt-[9px] pl-2 leading-[17px]">Values</h3>
            <button className="mt-[5px] block h-7 w-full rounded-[2px] border border-dashed border-[#bebbb8] bg-white pl-[10px] text-left">Add data fields here</button>
            <h3 className="mt-[10px] mb-1 pl-2 leading-[17px] font-semibold text-[#605e5c]">Drill through</h3>
            <div className="pl-2">
                <Toggle label="Cross-report" />
                <Toggle label="Keep all filters" on />
            </div>
            <button className="mt-1 block h-[26px] w-full rounded-[2px] border border-dashed border-[#bebbb8] bg-white pl-2 text-left whitespace-nowrap">Add drill-through fields here</button>
        </div>
    </aside>
);

const DataPane = () => (
    <aside className="w-[180px] shrink-0 border-l border-[#e1dfdd]">
        <div className="flex h-[38px] items-center justify-between pr-[6px] pl-2">
            <h2 className="text-[15px] font-semibold">Data</h2>
            <button aria-label="Collapse data"><DoubleChevron /></button>
        </div>
        <label className="mt-[7px] mr-[3px] ml-1 flex h-6 items-center rounded-[3px] border border-[#d2d0ce] border-b-[#605e5c] bg-white pl-[11px]">
            <Search className="h-4 w-4 shrink-0 text-[#605e5c]" strokeWidth={1.3} />
            <input type="text" placeholder="Search" aria-label="Search" className="ml-[6px] w-full min-w-0 bg-transparent text-[13px] outline-none placeholder:text-[#605e5c]" />
        </label>
        <button className="mt-[9px] flex h-6 items-center pl-2 text-[11px]">
            <ChevronDown className="h-[22px] w-[22px] text-[#605e5c]" strokeWidth={1.1} />
            <svg width="13" height="13" viewBox="0 0 13 13" fill="none" stroke="#252423" strokeWidth="1.2" aria-hidden="true">
                <rect x="0.6" y="0.6" width="11.8" height="11.8" rx="2" />
                <path d="M4.5 0.5V12.5M8.5 0.5V12.5M0.5 4.5H12.5M0.5 8.5H12.5" />
            </svg>
            <span className="ml-1">Sheet1</span>
        </button>
        <ul className="text-[11px]">
            {fields.map((field) => (
                <li key={field.label} className="flex h-6 items-center pl-[23px]">
                    <span className="w-[21px] shrink-0">
                        {field.icon === 'date' && <ChevronRight className="h-[22px] w-[22px] text-[#605e5c]" strokeWidth={1.1} />}
                    </span>
                    <label className="flex items-center whitespace-nowrap">
                        <input type="checkbox" className="h-3 w-3 shrink-0 appearance-none rounded-[2px] border border-[#797775]" />
                        <span className="ml-2 w-[18px] shrink-0">
                            {field.icon === 'sum' && (
                                <svg width="12" height="13" viewBox="0 0 12 13" fill="none" stroke="#252423" strokeWidth="1.2" aria-hidden="true">
                                    <path d="M11 2.5V0.6H1L6 6.5L1 12.4H11.5V10.5" />
                                </svg>
                            )}
                            {field.icon === 'date' && (
                                <svg width="13" height="13" viewBox="0 0 13 13" fill="none" stroke="#252423" aria-hidden="true">
                                    <rect x="0.5" y="1" width="12" height="11.5" rx="2" />
                                    <path d="M0.5 3.5H12.5" strokeWidth="1.4" />
                                    <path d="M5 6.5H11M3 9.5H9" strokeDasharray="1 1" />
                                </svg>
                            )}
                        </span>
                        <span>{field.label}</span>
                    </label>
                </li>
            ))}
        </ul>
    </aside>
);

const StatusBar = () => (
    <footer className="flex h-[21px] items-center border-t border-[#e1dfdd] pt-1 text-[12px] leading-4 text-[#484644]">
        <span className="pl-1">Page 1 of 1</span>
        <div className="ml-auto flex items-center pr-4">
            <button aria-label="Zoom out"><svg width="5" height="11" stroke="#605e5c" strokeWidth="2"><path d="M0 5.5H5" /></svg></button>
            <input
                type="range"
                aria-label="Zoom"
                min="0"
                max="100"
                defaultValue="52"
                className="mx-1 h-[11px] w-[100px] appearance-none bg-transparent [&::-webkit-slider-runnable-track]:h-px [&::-webkit-slider-runnable-track]:bg-[#605e5c] [&::-webkit-slider-thumb]:-mt-[5px] [&::-webkit-slider-thumb]:h-[11px] [&::-webkit-slider-thumb]:w-1 [&::-webkit-slider-thumb]:appearance-none [&::-webkit-slider-thumb]:bg-[#605e5c]"
            />
            <button aria-label="Zoom in" className="ml-[2px]"><svg width="8" height="11" stroke="#605e5c" strokeWidth="1.5"><path d="M0 5.5H8M4 1.5V9.5" /></svg></button>
            <span className="w-[42px] pl-[13px] text-[12px] text-[#605e5c]">112%</span>
            <button aria-label="Fit to page" className="ml-[14px]">
                <svg width="16" height="13" viewBox="0 0 16 13" fill="none" stroke="#605e5c" aria-hidden="true">
                    <rect x="0.5" y="0.5" width="15" height="11" />
                    <path d="M3 5V3H5.5M10.5 3H13V5M13 7.5V9.5H10.5M5.5 9.5H3V7.5" />
                </svg>
            </button>
        </div>
    </footer>
);

const App = () => (
    <div className="flex h-screen flex-col overflow-hidden bg-[#f3f2f1] font-['Open_Sans','Noto_Sans',sans-serif] text-[#252423]">
        <TitleBar />
        <Ribbon />
        <div className="flex min-h-0 grow">
            <SideRail />
            <div className="flex min-w-0 grow flex-col">
                <div className="flex min-h-0 grow">
                    <Canvas />
                    <FiltersPane />
                </div>
                <PageTabs />
            </div>
            <VisualizationsPane />
            <DataPane />
        </div>
        <StatusBar />
    </div>
);

export default App;
